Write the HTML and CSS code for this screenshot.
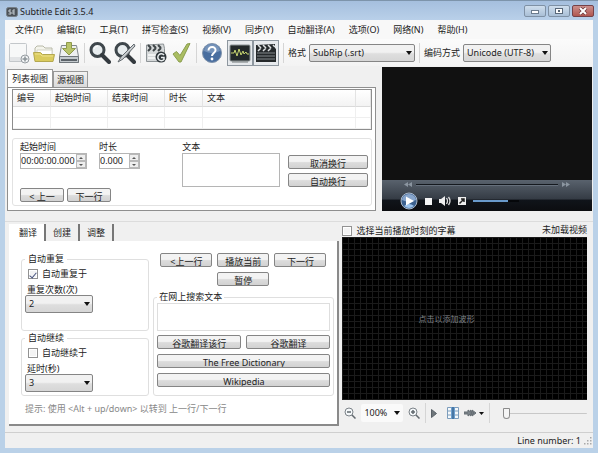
FILE: index.html
```html
<!DOCTYPE html>
<html lang="zh-CN">
<head>
    <meta charset="UTF-8">
    <meta name="viewport" content="width=device-width, initial-scale=1.0">
    <title>Subtitle Edit 3.5.4</title>
    <link rel="stylesheet" href="styles.css">
</head>
<body>
    <header class="titlebar">
        <svg class="app-icon" width="12" height="10" viewBox="0 0 12 10"><rect x="0.5" y="0.5" width="11" height="9" rx="2" fill="#4c5258" stroke="#777f88"/><path d="M5 3H3v2h2v2H2.500M9 3H7v4h2M7 5h2" fill="none" stroke="#c5cdd4"/></svg>
        <h1>Subtitle Edit 3.5.4</h1>
        <div class="window-buttons">
            <button type="button" aria-label="最小化"><svg width="10" height="8" viewBox="0 0 10 8"><rect x="1.500" y="3.500" width="7" height="3" fill="#fff" stroke="#6b7b8d"/></svg></button>
            <button type="button" aria-label="最大化"><svg width="10" height="8" viewBox="0 0 10 8"><rect x="1.500" y="1.500" width="7" height="5" fill="#fff" stroke="#596879"/><rect x="4" y="3" width="2" height="2" fill="#596879"/></svg></button>
            <button type="button" class="close" aria-label="关闭"><svg width="10" height="8" viewBox="0 0 10 8"><path d="M2 1l6 6M8 1L2 7" stroke="#6e3a3a" stroke-width="3.500"/><path d="M2 1l6 6M8 1L2 7" stroke="#fff" stroke-width="2"/></svg></button>
        </div>
    </header>

    <div class="client">
        <nav class="menu">
            <button type="button">文件(F)</button>
            <button type="button">编辑(E)</button>
            <button type="button">工具(T)</button>
            <button type="button">拼写检查(S)</button>
            <button type="button">视频(V)</button>
            <button type="button">同步(Y)</button>
            <button type="button">自动翻译(A)</button>
            <button type="button">选项(O)</button>
            <button type="button">网络(N)</button>
            <button type="button">帮助(H)</button>
        </nav>

        <div class="toolbar">
            <button type="button" class="tool" aria-label="新建"><svg viewBox="0 0 22 22"><path d="M2.500 1.500h15a1 1 0 0 1 1 1v17h-17v-17z" fill="#f7f8f8" stroke="#c3c7ca"/><path d="M2 17h11" stroke="#e2e4e6" stroke-width="4"/><circle cx="17" cy="17" r="4" fill="#f2f4f5" stroke="#969ca1"/><path d="M17 14.500v5M14.500 17h5" stroke="#8b9297" stroke-width="1.500"/></svg></button>
            <button type="button" class="tool" aria-label="打开"><svg viewBox="0 0 22 22"><path d="M2 18V6l2-2h6l2 2h7v6" fill="#f4f4ec" stroke="#b8b9a8"/><path d="M4 8h15v6H4z" fill="#fff" stroke="#d3d3c7"/><path d="M0.500 10.500h7l2 2h12l-1.500 7H2z" fill="#dacb5e" stroke="#b4a850"/><path d="M2 12h5l2 2h11" fill="none" stroke="#eee28e"/></svg></button>
            <button type="button" class="tool" aria-label="保存"><svg viewBox="0 0 22 22"><path d="M3.500 3.500h15l2 11v6h-19v-6z" fill="#eef0f1" stroke="#82888d"/><path d="M1.500 14.500h19v6h-19z" fill="#c3c9cd" stroke="#70777c"/><path d="M3 18h16" stroke="#5c6369" stroke-width="2"/><path d="M8.500 0.500h5v6h4L11 13 4.500 6.500h4z" fill="#b9c46a" stroke="#8f9a4b"/></svg></button>
            <span class="divider"></span>
            <button type="button" class="tool" aria-label="查找"><svg viewBox="0 0 22 22"><circle cx="8.500" cy="8" r="6.500" fill="#e8edef" stroke="#3f474c" stroke-width="3"/><path d="M13 13l7 7" stroke="#343a3f" stroke-width="4" stroke-linecap="round"/><path d="M5 7a4 4 0 0 1 4-3" fill="none" stroke="#fff"/></svg></button>
            <button type="button" class="tool" aria-label="替换"><svg viewBox="0 0 22 22"><circle cx="8.500" cy="8" r="6.500" fill="#e8edef" stroke="#3f474c" stroke-width="3"/><path d="M13 13l7 7" stroke="#343a3f" stroke-width="4" stroke-linecap="round"/><path d="M20 2L7 15l-3 5 5-3L21 4z" fill="#c8cccf" stroke="#62696e"/></svg></button>
            <span class="divider"></span>
            <button type="button" class="tool" aria-label="修复"><svg viewBox="0 0 22 22"><path d="M1.500 3l17-1 1 4.500v13h-18z" fill="#d6d9da" stroke="#8d9396"/><path d="M3 3l3 3M8 3l3 3M13 3l3 3M3 9l3-3M8 9l3-3M13 9l3-3" stroke="#3f4548" stroke-width="2"/><path d="M3 13h14M3 16h12" stroke="#f2f3f3" stroke-width="2"/><circle cx="16" cy="15" r="5.500" fill="#30373b"/><path d="M19 13a3.500 3.500 0 1 0 0 4.500v-2h-3" fill="none" stroke="#e9edef" stroke-width="1.500"/></svg></button>
            <button type="button" class="tool" aria-label="拼写检查"><svg viewBox="0 0 22 22"><path d="M3 12l3.500-2.500 3.500 4L17 2l3-0.500L11 20H9z" fill="#aabd62" stroke="#8a9d4e"/></svg></button>
            <span class="divider"></span>
            <button type="button" class="tool" aria-label="帮助"><svg viewBox="0 0 22 22"><circle cx="11" cy="11" r="9.500" fill="#496e9f" stroke="#8194ac"/><path d="M3 9a8 7 0 0 1 16 0q-8 4-16 0z" fill="#7593ba"/><path d="M7.500 8.500c0-5 7.500-4.500 7 0-.3 2.500-3.500 2.500-3.500 5.500" fill="none" stroke="#fff" stroke-width="2"/><circle cx="11" cy="17" r="1.400" fill="#fff"/></svg></button>
            <div class="toggles">
                <button type="button" class="toggle" aria-label="波形" aria-pressed="true"><svg viewBox="0 0 22 22"><rect x="1" y="3" width="20" height="16" rx="1" fill="#23292a" stroke="#8b9394"/><path d="M2 11h3l1-3 2 6 2-7 2 6 2-4 1 3 2-2 1 2h2" fill="none" stroke="#c5d36f"/><path d="M3 20h16" stroke="#72797b"/></svg></button>
                <button type="button" class="toggle" aria-label="视频" aria-pressed="true"><svg viewBox="0 0 22 22"><path d="M1 3l19-1v4l1 1v13H1z" fill="#25292b"/><path d="M3 3l3 3M8 3l3 3M13 3l3 3M18 3l2 2M3 9l3-3M8 9l3-3M13 9l3-3" stroke="#dfe2e3" stroke-width="1.500"/><path d="M2 11h18M2 14h18M2 17h18" stroke="#83898c"/></svg></button>
            </div>
            <span class="divider"></span>
            <label for="format">格式</label>
            <span class="select format"><select id="format"><option>SubRip (.srt)</option></select></span>
            <span class="divider"></span>
            <label for="encoding">编码方式</label>
            <span class="select encoding"><select id="encoding"><option>Unicode (UTF-8)</option></select></span>
        </div>

        <main>
            <section class="upper">
                <div class="list-area">
                    <div class="list-tabs" role="tablist">
                        <button type="button" role="tab" class="active" aria-selected="true">列表视图</button>
                        <button type="button" role="tab" aria-selected="false">源视图</button>
                    </div>
                    <div class="list-panel">
                        <table class="subtitles">
                            <thead>
                                <tr>
                                    <th class="col-number">编号</th>
                                    <th class="col-time">起始时间</th>
                                    <th class="col-time">结束时间</th>
                                    <th class="col-number">时长</th>
                                    <th>文本</th>
                                    <th class="col-end"></th>
                                </tr>
                            </thead>
                            <tbody>
                                <tr><td></td><td></td><td></td><td></td><td></td><td></td></tr>
                                <tr><td></td><td></td><td></td><td></td><td></td><td></td></tr>
                            </tbody>
                        </table>
                        <div class="editor">
                            <div class="timing">
                                <div class="timing-fields">
                                    <div class="field start">
                                        <label for="startTime">起始时间</label>
                                        <div class="spinner">
                                            <input type="text" id="startTime" value="00:00:00.000">
                                            <div class="steps"><button type="button" class="up" aria-label="增加"></button><button type="button" class="down" aria-label="减少"></button></div>
                                        </div>
                                    </div>
                                    <div class="field duration">
                                        <label for="duration">时长</label>
                                        <div class="spinner">
                                            <input type="text" id="duration" value="0.000">
                                            <div class="steps"><button type="button" class="up" aria-label="增加"></button><button type="button" class="down" aria-label="减少"></button></div>
                                        </div>
                                    </div>
                                </div>
                                <div class="line-buttons">
                                    <button type="button" class="btn">&lt; 上一</button>
                                    <button type="button" class="btn">下一行</button>
                                </div>
                            </div>
                            <div class="field text-field">
                                <label for="lineText">文本</label>
                                <textarea id="lineText"></textarea>
                            </div>
                            <div class="wrap-buttons">
                                <button type="button" class="btn">取消换行</button>
                                <button type="button" class="btn">自动换行</button>
                            </div>
                        </div>
                    </div>
                </div>

                <div class="video">
                    <div class="screen"></div>
                    <div class="player">
                        <div class="seek">
                            <svg width="8" height="5" viewBox="0 0 8 5"><path d="M4 0v5L0 2.500zM8 0v5L4 2.500z" fill="#8b95a0"/></svg>
                            <span class="seek-line"></span>
                            <svg width="8" height="5" viewBox="0 0 8 5"><path d="M0 0v5l4-2.500zM4 0v5l4-2.500z" fill="#8b95a0"/></svg>
                        </div>
                        <div class="controls">
                            <button type="button" class="icon" aria-label="播放"><svg width="18" height="18" viewBox="0 0 18 18"><circle cx="9" cy="9" r="8" fill="#3c618f" stroke="#aab8c9"/><path d="M2 8a7 6 0 0 1 14 0q-7 3-14 0z" fill="#87a5cb"/><path d="M4 14q5-4 10 0-5 4-10 0" fill="#9bc3ed"/><path d="M6 4.500v9l8-4.500z" fill="#fff"/></svg></button>
                            <button type="button" class="icon" aria-label="停止"><svg width="7" height="7" viewBox="0 0 7 7"><path d="M0 0h7v7H0z" fill="#f4f4f4"/></svg></button>
                            <button type="button" class="icon" aria-label="静音"><svg width="12" height="10" viewBox="0 0 12 10"><path d="M0 3h2l4-3v10L2 7H0z" fill="#eee"/><path d="M7.500 2q2 3 0 6M9.500 1q3 4 0 8" fill="none" stroke="#ddd" stroke-width="1.300"/></svg></button>
                            <button type="button" class="icon" aria-label="全屏"><svg width="8" height="8" viewBox="0 0 8 8"><path d="M0 0h8v8H0z" fill="#eee"/><path d="M1.500 6.500l4-4M3 2h3v3" fill="none" stroke="#222" stroke-width="1.500"/></svg></button>
                            <span class="volume"><span class="volume-level"></span></span>
                        </div>
                    </div>
                </div>
            </section>

            <section class="lower">
                <div class="work-area">
                    <div class="work-tabs" role="tablist">
                        <button type="button" role="tab" class="active" aria-selected="true">翻译</button>
                        <button type="button" role="tab" aria-selected="false">创建</button>
                        <button type="button" role="tab" aria-selected="false">调整</button>
                    </div>
                    <div class="work-panel">
                        <div class="work-columns">
                            <div class="auto-options">
                                <fieldset class="repeat">
                                    <legend>自动重复</legend>
                                    <label class="check"><input type="checkbox" checked>自动重复于</label>
                                    <label for="repeatCount">重复次数(次)</label>
                                    <span class="select"><select id="repeatCount"><option>2</option></select></span>
                                </fieldset>
                                <fieldset>
                                    <legend>自动继续</legend>
                                    <label class="check"><input type="checkbox">自动继续于</label>
                                    <label for="delay">延时(秒)</label>
                                    <span class="select"><select id="delay"><option>3</option></select></span>
                                </fieldset>
                            </div>
                            <div class="translate">
                                <div class="play-buttons">
                                    <button type="button" class="btn">&lt;上一行</button>
                                    <button type="button" class="btn">播放当前</button>
                                    <button type="button" class="btn">下一行</button>
                                    <button type="button" class="btn pause">暂停</button>
                                </div>
                                <fieldset class="search">
                                    <legend>在网上搜索文本</legend>
                                    <textarea aria-label="在网上搜索文本"></textarea>
                                    <div class="search-buttons">
                                        <button type="button" class="btn">谷歌翻译该行</button>
                                        <button type="button" class="btn">谷歌翻译</button>
                                        <button type="button" class="btn wide">The Free Dictionary</button>
                                        <button type="button" class="btn wide">Wikipedia</button>
                                    </div>
                                </fieldset>
                            </div>
                        </div>
                        <p class="hint">提示: 使用 &lt;Alt + up/down&gt; 以转到 上一行/下一行</p>
                    </div>
                </div>

                <div class="wave-area">
                    <div class="wave-head">
                        <label class="check"><input type="checkbox">选择当前播放时刻的字幕</label>
                        <span>未加载视频</span>
                    </div>
                    <div class="waveform"><span>点击以添加波形</span></div>
                    <div class="wave-tools">
                        <button type="button" class="icon" aria-label="缩小"><svg width="12" height="12" viewBox="0 0 12 12"><circle cx="5" cy="5" r="4" fill="#f5f8fa" stroke="#7b8288"/><path d="M3 5h4M8 8l3.500 3.500" stroke="#62696f" stroke-width="1.500"/></svg></button>
                        <span class="select zoom"><select aria-label="缩放"><option>100%</option></select></span>
                        <button type="button" class="icon" aria-label="放大"><svg width="12" height="12" viewBox="0 0 12 12"><circle cx="5" cy="5" r="4" fill="#f5f8fa" stroke="#7b8288"/><path d="M3 5h4M5 3v4M8 8l3.500 3.500" stroke="#62696f" stroke-width="1.500"/></svg></button>
                        <span class="divider"></span>
                        <button type="button" class="icon" aria-label="播放"><svg width="6" height="9" viewBox="0 0 6 9"><path d="M0.500 0.500v8l5-4z" fill="#6f767b" stroke="#596067"/></svg></button>
                        <button type="button" class="icon center" aria-label="居中"><svg width="12" height="12" viewBox="0 0 12 12"><path d="M0.500 0.500h11v11H0.500zM0 4h12M0 8h12" fill="#f4f8fb" stroke="#7d9dbc"/><path d="M4 0h4v12H4z" fill="#6d9fce"/><path d="M6 0v12" stroke="#244f7b"/></svg></button>
                        <button type="button" class="icon" aria-label="播放速度"><svg width="20" height="8" viewBox="0 0 20 8"><path d="M0 3h4V1l4 3-4 3V5H0zM6 1l4 3-4 3M8 3V1l4 3-4 3V5" fill="#7b8389" stroke="#646c72"/><path d="M15 3h5l-2.500 3z" fill="#111"/></svg></button>
                        <span class="divider"></span>
                        <input type="range" class="position" min="0" max="100" value="0" aria-label="位置">
                    </div>
                </div>
            </section>
        </main>

        <footer class="statusbar">
            <span>Line number: 1</span>
            <svg width="8" height="8" viewBox="0 0 8 8"><path d="M6 0h1.500v1.500H6zM3 3h1.500v1.500H3zM6 3h1.500v1.500H6zM0 6h1.500v1.500H0zM3 6h1.500v1.500H3zM6 6h1.500v1.500H6z" fill="#a9a9a9"/></svg>
        </footer>
    </div>
</body>
</html>
```

FILE: styles.css
```css
* {
    box-sizing: border-box;
}
body {
    margin: 0;
    min-height: 100vh;
    padding: 0 5px 5px;
    display: flex;
    flex-direction: column;
    background-color: #bad1e8;
    border-top: 1px solid #7d94ab;
    color: #222;
    font-family: "Noto Sans", "Noto Sans CJK SC", sans-serif;
    font-size: 9px;
    line-height: 12px;
}
button, input, select, textarea {
    margin: 0;
    padding: 0;
    color: inherit;
    font: inherit;
}
button {
    white-space: nowrap;
}
svg {
    display: block;
}

/* title bar */
.titlebar {
    display: flex;
    align-items: center;
    gap: 2px;
    height: 19px;
    margin: 0 -5px;
    padding: 0 4px 0 6px;
    background: linear-gradient(#a5bfde, #b9d0e9);
}
.titlebar h1 {
    flex: 1;
    margin: 0;
    padding-top: 3px;
    font-size: 9px;
    font-weight: normal;
}
.app-icon {
    margin-top: 3px;
}
.window-buttons {
    display: flex;
    gap: 2px;
}
.window-buttons button {
    display: flex;
    align-items: center;
    justify-content: center;
    width: 22px;
    height: 12px;
    border: 1px solid #7f91a5;
    border-radius: 2px;
    background: linear-gradient(#cfdeed, #a9bfd6);
}
.window-buttons .close {
    border-color: #754248;
    background: linear-gradient(#cb8f8c, #b15750);
}

.client {
    flex: 1;
    display: flex;
    flex-direction: column;
    background-color: #f0f0f0;
}

/* menu and toolbar */
.menu {
    display: flex;
    gap: 14px;
    height: 19px;
    padding-left: 10px;
    background-color: #f8f8f8;
}
.menu button {
    border: 0;
    background: none;
}
.toolbar {
    display: flex;
    align-items: center;
    gap: 3px;
    height: 27px;
    padding-left: 3px;
    background: linear-gradient(#fbfbfb, #f3f3f3);
}
.tool {
    width: 22px;
    height: 22px;
    border: 0;
    background: none;
}
.toggles {
    display: flex;
    margin-left: 1px;
}
.toggle {
    width: 26px;
    height: 26px;
    padding: 1px;
    border: 1px solid #8e979f;
    background-color: #e7eaed;
}
.divider {
    width: 1px;
    height: 20px;
    background-color: #d5d5d5;
}
.toolbar .divider {
    margin: 0 1px;
}

/* shared controls */
.btn {
    height: 14px;
    padding-top: 2px;
    border: 1px solid #858585;
    border-radius: 2px;
    background: linear-gradient(#f3f3f3 45%, #dcdcdc 55%, #d2d2d2);
    line-height: 11px;
    overflow: hidden;
}
.icon {
    border: 0;
    background: none;
}
.select {
    position: relative;
    display: block;
}
.select select {
    display: block;
    width: 100%;
    height: 18px;
    padding-left: 3px;
    border: 1px solid #858585;
    border-radius: 2px;
    background: linear-gradient(#f1f1f1 45%, #dedede 55%, #d6d6d6);
    appearance: none;
}
.select::after {
    content: "";
    position: absolute;
    top: 7px;
    right: 3px;
    border: 3px solid transparent;
    border-top: 4px solid #111;
    border-bottom: 0;
    pointer-events: none;
}
.format {
    width: 106px;
}
.encoding {
    width: 88px;
}
textarea {
    display: block;
    width: 100%;
    border: 1px solid #b5b5b5;
    background-color: #fff;
    resize: none;
}
fieldset {
    min-width: 0;
    margin: 0;
    padding: 0 3px 3px;
    border: 1px solid #dfdfdf;
    border-radius: 3px;
}
legend {
    padding: 0 2px;
}
.check {
    display: flex;
    align-items: center;
    gap: 4px;
}
.check input {
    width: 10px;
    height: 10px;
    border: 1px solid #929292;
    background-color: #f4f4f4;
    box-shadow: inset 0 0 0 1px #fff;
    appearance: none;
}
.check input:checked {
    display: grid;
    place-items: center;
}
.check input:checked::before {
    content: "";
    width: 3px;
    height: 6px;
    border: solid #4a5580;
    border-width: 0 1px 1px 0;
    transform: rotate(40deg);
}

main {
    flex: 1;
    display: flex;
    flex-direction: column;
}

/* subtitle list and video */
.upper {
    display: grid;
    grid-template-columns: 369fr 210fr;
    gap: 6px;
    padding: 1px 1px 10px 2px;
    border-bottom: 1px solid #dcdcdc;
}
.list-area {
    padding-top: 2px;
}
.list-tabs {
    display: flex;
    align-items: flex-end;
}
.list-tabs button {
    height: 16px;
    padding: 0 3px;
    border: 1px solid #999;
    border-bottom: 0;
    background: linear-gradient(#f2f2f2, #dadada);
}
.list-tabs .active {
    height: 18px;
    padding: 0 4px;
    background: #fff;
}
.list-panel {
    padding: 1px 3px 4px 4px;
    border: 1px solid #8f8f8f;
    background-color: #fff;
}
.subtitles {
    width: 100%;
    border: 1px solid #8d8d8d;
    border-spacing: 0;
    table-layout: fixed;
}
.subtitles th {
    height: 17px;
    padding: 0 4px;
    border-right: 1px solid #e3e3e3;
    border-bottom: 1px solid #dadada;
    background: linear-gradient(#fff, #f3f3f3);
    font-weight: normal;
    text-align: left;
}
.subtitles td {
    height: 11px;
    padding: 0;
    border-right: 1px solid #efefef;
    border-bottom: 1px solid #efefef;
}
.subtitles .col-number {
    width: 38px;
}
.subtitles .col-time {
    width: 57px;
}
.subtitles .col-end {
    width: 15px;
}
.editor {
    display: grid;
    grid-template-columns: 158fr 100fr 80px;
    gap: 8px;
    margin-top: 8px;
    padding: 2px 3px 3px 7px;
    border: 1px solid #e2e2e2;
    border-radius: 3px;
}
.field label {
    display: block;
}
.timing-fields {
    display: flex;
    gap: 12px;
}
.start {
    width: 67px;
}
.duration {
    width: 41px;
}
.spinner {
    display: flex;
    height: 16px;
    border: 1px solid #b5b5b5;
    background-color: #fff;
}
.spinner input {
    flex: 1;
    min-width: 0;
    border: 0;
    background: none;
}
.steps {
    display: grid;
    width: 10px;
}
.steps button {
    display: grid;
    place-items: center;
    border: 1px solid #b9b9b9;
    background-color: #eee;
}
.steps button::before {
    content: "";
    border: 2px solid transparent;
}
.steps .up::before {
    border-top: 0;
    border-bottom-color: #555;
}
.steps .down::before {
    border-bottom: 0;
    border-top-color: #555;
}
.line-buttons {
    display: flex;
    gap: 3px;
    margin-top: 19px;
}
.line-buttons .btn {
    width: 44px;
}
.text-field textarea {
    height: 34px;
}
.wrap-buttons {
    display: grid;
    align-content: start;
    gap: 4px;
    padding-top: 14px;
}

.video {
    display: flex;
    flex-direction: column;
    background-color: #111;
}
.screen {
    flex: 1;
}
.player {
    padding: 2px 22px 1px 18px;
    background: linear-gradient(#59626d, #343b44 62%, #10141a 64%, #0c0d10);
}
.seek {
    display: flex;
    align-items: center;
    gap: 4px;
    padding-left: 4px;
}
.seek-line {
    flex: 1;
    height: 2px;
    border-top: 1px solid #15191f;
    border-bottom: 1px solid #66707c;
}
.controls {
    display: flex;
    align-items: center;
    gap: 7px;
    margin-top: 5px;
}
.volume {
    width: 46px;
    height: 2px;
    background-color: #05070a;
}
.volume-level {
    display: block;
    width: 75%;
    height: 2px;
    background-color: #6999ca;
}

/* translate tab and waveform */
.lower {
    flex: 1;
    display: grid;
    grid-template-columns: minmax(0, 331fr) minmax(0, 245fr);
    gap: 3px;
    padding: 2px 6px 6px 4px;
}
.work-area {
    display: flex;
    flex-direction: column;
}
.work-tabs {
    display: flex;
}
.work-tabs button {
    height: 17px;
    padding: 0 7px;
    border: 0;
    border-right: 2px solid #777;
    background: none;
}
.work-tabs .active {
    padding: 0 7px 0 10px;
    background-color: #fff;
}
.work-panel {
    flex: 1;
    padding: 12px 3px 4px 12px;
    border-right: 2px solid #8a8a8a;
    border-bottom: 2px solid #8a8a8a;
    background-color: #fff;
}
.work-columns {
    display: grid;
    grid-template-columns: 129fr 182fr;
    gap: 4px;
}
.auto-options {
    display: grid;
    align-content: start;
    gap: 1px;
}
.auto-options legend {
    padding: 0 3px;
}
.auto-options label {
    display: block;
    padding-left: 2px;
    line-height: 10px;
}
.auto-options .check {
    display: flex;
    padding: 4px 0 6px 3px;
}
.auto-options .select {
    width: 68px;
}
.repeat {
    padding-bottom: 17px;
}
.play-buttons {
    display: grid;
    grid-template-columns: repeat(3, 1fr);
    gap: 5px;
    padding: 0 8px 0 7px;
}
.pause {
    grid-column: 2;
}
.search {
    margin-top: 5px;
    padding: 0 3px 8px;
}
.search textarea {
    height: 28px;
    border-color: #dedede;
}
.search-buttons {
    display: grid;
    grid-template-columns: 1fr 1fr;
    gap: 5px;
    margin-top: 4px;
}
.wide {
    grid-column: 1 / 3;
}
.hint {
    margin: 7px 0 0 4px;
    color: #888;
}

.wave-area {
    display: flex;
    flex-direction: column;
}
.wave-head {
    display: flex;
    justify-content: space-between;
    height: 13px;
}
.waveform {
    flex: 1;
    display: flex;
    align-items: center;
    padding-left: 76px;
    background-color: #000;
    background-image: linear-gradient(90deg, #1b1b1b 1px, transparent 1px), linear-gradient(#1b1b1b 1px, transparent 1px);
    background-size: 6px 6px;
    color: #7d8187;
    font-size: 8px;
}
.wave-tools {
    display: flex;
    align-items: center;
    gap: 5px;
    height: 26px;
    padding-left: 2px;
}
.zoom {
    width: 42px;
}
.wave-tools .zoom select {
    border: 0;
    background: #fafafa;
}
.center {
    margin-left: 5px;
}
.position {
    flex: 1;
    min-width: 0;
    height: 12px;
    margin-left: 8px;
    background: linear-gradient(#c8c8c8, #c8c8c8) center / 100% 1px no-repeat;
    appearance: none;
}
.position::-webkit-slider-thumb {
    width: 7px;
    height: 11px;
    border: 1px solid #8b8b8b;
    border-radius: 1px 1px 4px 4px;
    background-color: #f5f5f5;
    appearance: none;
}

.statusbar {
    display: flex;
    align-items: center;
    justify-content: flex-end;
    gap: 3px;
    height: 16px;
    padding-right: 1px;
    border-top: 1px solid #cfcfcf;
}
```
